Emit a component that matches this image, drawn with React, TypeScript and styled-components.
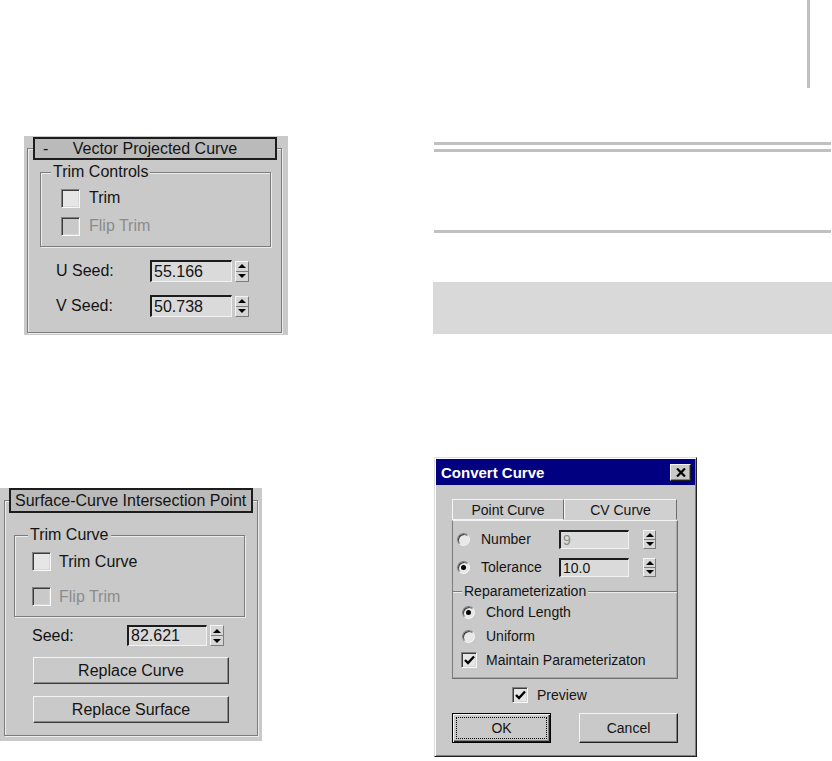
import styled, { createGlobalStyle } from 'styled-components';

const panelBg = '#c9c9c9';
const ink = '#141414';

const GlobalStyle = createGlobalStyle`
  html, body {
    margin: 0;
    padding: 0;
    background: #ffffff;
  }
  body {
    font-family: "Liberation Sans", Arial, sans-serif;
    color: ${ink};
  }
  * {
    box-sizing: border-box;
  }
`;

const Page = styled.div`
  display: flex;
  width: 832px;
  height: 761px;
  overflow: hidden;
`;

const LeftColumn = styled.div`
  width: 433px;
  display: flex;
  flex-direction: column;
  align-items: flex-start;
`;

const RightColumn = styled.div`
  width: 399px;
  display: flex;
  flex-direction: column;
  align-items: flex-start;
`;

/* ---------- page decorations ---------- */

const MarginMark = styled.div`
  align-self: stretch;
  display: flex;
  justify-content: flex-end;
  padding-right: 22px;
`;

const MarginBar = styled.div`
  width: 3px;
  height: 88px;
  background: #c0c0c0;
`;

const Rule = styled.div<{ $gap: number }>`
  margin-top: ${(p) => p.$gap}px;
  margin-left: 1px;
  width: 397px;
  height: 3px;
  background: #c0c0c0;
`;

const ShadedBlock = styled.div`
  margin-top: 49px;
  width: 399px;
  height: 52px;
  background: #d9d9d9;
`;

/* ---------- rollout panels ---------- */

const Rollout = styled.section<{
  $top: number;
  $left: number;
  $width: number;
  $height: number;
  $pad: string;
}>`
  margin-top: ${(p) => p.$top}px;
  margin-left: ${(p) => p.$left}px;
  width: ${(p) => p.$width}px;
  height: ${(p) => p.$height}px;
  padding: ${(p) => p.$pad};
  background: ${panelBg};
  font-size: 16px;
  display: flex;
  flex-direction: column;
`;

const RolloutFrame = styled.div`
  margin-top: 12px;
  flex: 1;
  display: flex;
  flex-direction: column;
  align-items: flex-start;
  border: 1px solid #7c7c7c;
  box-shadow: 1px 1px 0 #ececec, inset 1px 1px 0 #ececec;
`;

const RolloutHeader = styled.div<{ $height: number; $lift: number; $ml: number; $centered?: boolean }>`
  align-self: stretch;
  margin: -${(p) => p.$lift}px 4px 0 ${(p) => p.$ml}px;
  height: ${(p) => p.$height}px;
  border: 2px solid #1c1c1c;
  background: #bababa;
  display: grid;
  grid-template-columns: ${(p) => (p.$centered ? '28px 1fr 28px' : '1fr')};
  align-items: center;
  padding-left: ${(p) => (p.$centered ? 0 : 4)}px;
  white-space: nowrap;
  line-height: 1;
`;

const Collapse = styled.span`
  padding-left: 8px;
`;

const HeaderTitle = styled.span<{ $centered?: boolean }>`
  text-align: ${(p) => (p.$centered ? 'center' : 'left')};
`;

const GroupBox = styled.div<{ $top: number; $ml: number; $mr: number; $pb: number }>`
  align-self: stretch;
  margin: ${(p) => p.$top}px ${(p) => p.$mr}px 0 ${(p) => p.$ml}px;
  padding-bottom: ${(p) => p.$pb}px;
  border: 1px solid #7c7c7c;
  box-shadow: 1px 1px 0 #ececec, inset 1px 1px 0 #ececec;
`;

const RuleGroup = styled.div<{ $top: number }>`
  margin-top: ${(p) => p.$top}px;
  border-top: 1px solid #7c7c7c;
  box-shadow: inset 0 1px 0 #ececec;
`;

const GroupLabel = styled.span<{ $ml: number }>`
  display: block;
  width: fit-content;
  margin: -10px 0 0 ${(p) => p.$ml}px;
  padding: 0 2px;
  line-height: 18px;
  background: ${panelBg};
`;

const Rows = styled.div<{ $pt: number }>`
  padding-top: ${(p) => p.$pt}px;
`;

const CheckRow = styled.label<{ $h: number; $pl: number; $gap: number; $disabled?: boolean }>`
  display: flex;
  align-items: center;
  height: ${(p) => p.$h}px;
  padding-left: ${(p) => p.$pl}px;
  gap: ${(p) => p.$gap}px;
  color: ${(p) => (p.$disabled ? '#8c8c8c' : ink)};
  white-space: nowrap;
`;

const CheckBox = styled.span<{ $size: number; $disabled?: boolean }>`
  flex: none;
  width: ${(p) => p.$size}px;
  height: ${(p) => p.$size}px;
  display: flex;
  align-items: center;
  justify-content: center;
  border: 1px solid;
  border-color: #808080 #f8f8f8 #f8f8f8 #808080;
  box-shadow: inset 1px 1px 0 #3c3c3c, inset -1px -1px 0 #d6d6d6;
  background: ${(p) => (p.$disabled ? panelBg : '#e6e6e6')};
`;

const RadioDot = styled.span<{ $checked?: boolean }>`
  flex: none;
  position: relative;
  width: 13px;
  height: 13px;
  border-radius: 50%;
  border: 1px solid;
  border-color: #7a7a7a #f4f4f4 #f4f4f4 #7a7a7a;
  box-shadow: inset 1px 1px 0 #3c3c3c;
  background: #e8e8e8;

  &::after {
    content: '';
    display: ${(p) => (p.$checked ? 'block' : 'none')};
    position: absolute;
    left: 3px;
    top: 3px;
    width: 5px;
    height: 5px;
    border-radius: 50%;
    background: #000;
  }
`;

const FieldRow = styled.div<{ $top: number; $h: number; $pl: number }>`
  display: flex;
  align-items: center;
  margin-top: ${(p) => p.$top}px;
  height: ${(p) => p.$h}px;
  padding-left: ${(p) => p.$pl}px;
  white-space: nowrap;
`;

const FieldLabel = styled.span<{ $w: number }>`
  width: ${(p) => p.$w}px;
  flex: none;
`;

const NumberBox = styled.span<{ $w: number; $h: number; $disabled?: boolean }>`
  flex: none;
  width: ${(p) => p.$w}px;
  height: ${(p) => p.$h}px;
  display: flex;
  align-items: center;
  padding-left: 2px;
  background: #dadada;
  border-style: solid;
  border-width: 2px 1px 1px 2px;
  border-color: #1c1c1c #f2f2f2 #f2f2f2 #1c1c1c;
  color: ${(p) => (p.$disabled ? '#8a8a8a' : ink)};
  line-height: 1;
`;

const Spinner = styled.span<{ $w: number; $h: number }>`
  flex: none;
  display: flex;
  flex-direction: column;
  width: ${(p) => p.$w}px;
  height: ${(p) => p.$h}px;
  margin-left: 3px;
  background: #d6d6d6;
  border: 1px solid;
  border-color: #f4f4f4 #7c7c7c #7c7c7c #f4f4f4;
`;

const SpinHalf = styled.span`
  flex: 1;
  display: flex;
  align-items: center;
  justify-content: center;

  & + & {
    border-top: 1px solid #7c7c7c;
  }
`;

const Arrow = styled.span<{ $down?: boolean }>`
  width: 0;
  height: 0;
  border-left: 4px solid transparent;
  border-right: 4px solid transparent;
  ${(p) => (p.$down ? 'border-top: 4px solid #000;' : 'border-bottom: 4px solid #000;')}
`;

const PanelButton = styled.button<{ $top: number }>`
  margin: ${(p) => p.$top}px 0 0 28px;
  width: 196px;
  height: 27px;
  padding: 0;
  font-family: "Liberation Sans", Arial, sans-serif;
  font-size: 16px;
  color: ${ink};
  background: ${panelBg};
  border: 1px solid;
  border-color: #f4f4f4 #3a3a3a #3a3a3a #f4f4f4;
  box-shadow: inset -1px -1px 0 #8a8a8a;
`;

/* ---------- dialog ---------- */

const Dialog = styled.div`
  margin-top: 123px;
  margin-left: 1px;
  width: 263px;
  height: 300px;
  padding: 1px;
  display: flex;
  flex-direction: column;
  align-items: flex-start;
  background: ${panelBg};
  border: 1px solid;
  border-color: #dedede #202020 #202020 #dedede;
  box-shadow: inset 1px 1px 0 #ffffff, inset -1px -1px 0 #808080;
  font-size: 14px;
`;

const TitleBar = styled.div`
  align-self: stretch;
  height: 26px;
  display: flex;
  align-items: center;
  justify-content: space-between;
  padding: 0 4px 0 5px;
  background: #000080;
  color: #ffffff;
  font-size: 15px;
  font-weight: bold;
`;

const CloseButton = styled.span`
  width: 21px;
  height: 17px;
  display: flex;
  align-items: center;
  justify-content: center;
  background: ${panelBg};
  border: 1px solid;
  border-color: #f4f4f4 #202020 #202020 #f4f4f4;
  box-shadow: inset -1px -1px 0 #808080;
`;

const TabStrip = styled.div`
  display: flex;
  margin: 14px 0 0 16px;
  position: relative;
  z-index: 1;
`;

const Tab = styled.span<{ $w: number; $active?: boolean }>`
  width: ${(p) => p.$w}px;
  height: 21px;
  display: flex;
  align-items: center;
  justify-content: center;
  background: ${(p) => (p.$active ? '#d0d0d0' : panelBg)};
  border: 1px solid;
  border-color: #f4f4f4 #6e6e6e ${(p) => (p.$active ? 'transparent' : '#f4f4f4')} #f4f4f4;
  margin-bottom: ${(p) => (p.$active ? -1 : 0)}px;
`;

const TabBody = styled.div`
  margin-left: 16px;
  width: 226px;
  height: 159px;
  padding-top: 4px;
  border: 1px solid;
  border-color: #f4f4f4 #6e6e6e #6e6e6e #7c7c7c;
  box-shadow: inset -1px -1px 0 #a8a8a8;
`;

const OptionRow = styled.div<{ $h: number; $pl: number; $gap: number }>`
  display: flex;
  align-items: center;
  height: ${(p) => p.$h}px;
  padding-left: ${(p) => p.$pl}px;
  gap: ${(p) => p.$gap}px;
  white-space: nowrap;
`;

const OptionLabel = styled.span<{ $w?: number }>`
  ${(p) => (p.$w ? `width: ${p.$w}px; flex: none;` : '')}
`;

const PreviewRow = styled.label`
  display: flex;
  align-items: center;
  gap: 9px;
  margin: 8px 0 0 76px;
  height: 16px;
`;

const ButtonRow = styled.div`
  display: flex;
  gap: 28px;
  margin: 10px 0 0 16px;
`;

const DialogButton = styled.button<{ $default?: boolean }>`
  width: 99px;
  height: 30px;
  padding: 3px;
  font-family: "Liberation Sans", Arial, sans-serif;
  font-size: 14px;
  color: ${ink};
  background: ${panelBg};
  border: 1px solid;
  border-color: ${(p) => (p.$default ? '#000' : '#f4f4f4 #202020 #202020 #f4f4f4')};
  box-shadow: ${(p) =>
    p.$default
      ? 'inset 1px 1px 0 #f4f4f4, inset -1px -1px 0 #202020, inset -2px -2px 0 #808080'
      : 'inset -1px -1px 0 #808080'};
`;

const FocusRing = styled.span<{ $on?: boolean }>`
  display: flex;
  align-items: center;
  justify-content: center;
  width: 100%;
  height: 100%;
  border: 1px dotted ${(p) => (p.$on ? '#000' : 'transparent')};
`;

/* ---------- small parts ---------- */

function Spin({ w, h }: { w: number; h: number }) {
  return (
    <Spinner $w={w} $h={h}>
      <SpinHalf>
        <Arrow />
      </SpinHalf>
      <SpinHalf>
        <Arrow $down />
      </SpinHalf>
    </Spinner>
  );
}

function Tick() {
  return (
    <svg width="11" height="10" viewBox="0 0 11 10">
      <path d="M1 5 L4 8 L10 1.5" fill="none" stroke="#000" strokeWidth="2.4" />
    </svg>
  );
}

function CloseGlyph() {
  return (
    <svg width="10" height="9" viewBox="0 0 10 9">
      <path d="M1 0.5 L9 8.5 M9 0.5 L1 8.5" stroke="#000" strokeWidth="2.2" />
    </svg>
  );
}

export default function App() {
  return (
    <>
      <GlobalStyle />
      <Page>
        <LeftColumn>
          <Rollout $top={136} $left={24} $width={264} $height={199} $pad="0 6px 2px 3px">
            <RolloutFrame>
              <RolloutHeader $height={23} $lift={12} $ml={5} $centered>
                <Collapse>-</Collapse>
                <HeaderTitle $centered>Vector Projected Curve</HeaderTitle>
              </RolloutHeader>
              <GroupBox $top={12} $ml={12} $mr={10} $pb={6}>
                <GroupLabel $ml={10}>Trim Controls</GroupLabel>
                <Rows $pt={3}>
                  <CheckRow $h={28} $pl={20} $gap={9}>
                    <CheckBox $size={19} />
                    Trim
                  </CheckRow>
                  <CheckRow $h={28} $pl={20} $gap={9} $disabled>
                    <CheckBox $size={19} $disabled />
                    Flip Trim
                  </CheckRow>
                </Rows>
              </GroupBox>
              <FieldRow $top={13} $h={22} $pl={28}>
                <FieldLabel $w={94}>U Seed:</FieldLabel>
                <NumberBox $w={82} $h={22}>55.166</NumberBox>
                <Spin w={14} h={21} />
              </FieldRow>
              <FieldRow $top={13} $h={22} $pl={28}>
                <FieldLabel $w={94}>V Seed:</FieldLabel>
                <NumberBox $w={82} $h={22}>50.738</NumberBox>
                <Spin w={14} h={21} />
              </FieldRow>
            </RolloutFrame>
          </Rollout>

          <Rollout $top={153} $left={0} $width={262} $height={253} $pad="0 4px 5px 4px">
            <RolloutFrame>
              <RolloutHeader $height={25} $lift={13} $ml={4}>
                <HeaderTitle>Surface-Curve Intersection Point</HeaderTitle>
              </RolloutHeader>
              <GroupBox $top={22} $ml={9} $mr={12} $pb={2}>
                <GroupLabel $ml={13}>Trim Curve</GroupLabel>
                <Rows $pt={0}>
                  <CheckRow $h={35} $pl={17} $gap={8}>
                    <CheckBox $size={19} />
                    Trim Curve
                  </CheckRow>
                  <CheckRow $h={35} $pl={17} $gap={8} $disabled>
                    <CheckBox $size={19} $disabled />
                    Flip Trim
                  </CheckRow>
                </Rows>
              </GroupBox>
              <FieldRow $top={8} $h={21} $pl={27}>
                <FieldLabel $w={95}>Seed:</FieldLabel>
                <NumberBox $w={80} $h={21}>82.621</NumberBox>
                <Spin w={14} h={21} />
              </FieldRow>
              <PanelButton $top={11}>Replace Curve</PanelButton>
              <PanelButton $top={12}>Replace Surface</PanelButton>
            </RolloutFrame>
          </Rollout>
        </LeftColumn>

        <RightColumn>
          <MarginMark>
            <MarginBar />
          </MarginMark>
          <Rule $gap={54} />
          <Rule $gap={4} />
          <Rule $gap={78} />
          <ShadedBlock />

          <Dialog>
            <TitleBar>
              <span>Convert Curve</span>
              <CloseButton>
                <CloseGlyph />
              </CloseButton>
            </TitleBar>
            <TabStrip>
              <Tab $w={112}>Point Curve</Tab>
              <Tab $w={113} $active>
                CV Curve
              </Tab>
            </TabStrip>
            <TabBody>
              <OptionRow $h={28} $pl={4} $gap={11}>
                <RadioDot />
                <OptionLabel $w={67}>Number</OptionLabel>
                <NumberBox $w={70} $h={19} $disabled>
                  9
                </NumberBox>
                <Spin w={13} h={19} />
              </OptionRow>
              <OptionRow $h={28} $pl={4} $gap={11}>
                <RadioDot $checked />
                <OptionLabel $w={67}>Tolerance</OptionLabel>
                <NumberBox $w={70} $h={19}>10.0</NumberBox>
                <Spin w={13} h={19} />
              </OptionRow>
              <RuleGroup $top={10}>
                <GroupLabel $ml={9}>Reparameterization</GroupLabel>
                <OptionRow $h={24} $pl={9} $gap={11}>
                  <RadioDot $checked />
                  <OptionLabel>Chord Length</OptionLabel>
                </OptionRow>
                <OptionRow $h={24} $pl={9} $gap={11}>
                  <RadioDot />
                  <OptionLabel>Uniform</OptionLabel>
                </OptionRow>
                <OptionRow $h={24} $pl={8} $gap={9}>
                  <CheckBox $size={16}>
                    <Tick />
                  </CheckBox>
                  <OptionLabel>Maintain Parameterizaton</OptionLabel>
                </OptionRow>
              </RuleGroup>
            </TabBody>
            <PreviewRow>
              <CheckBox $size={16}>
                <Tick />
              </CheckBox>
              Preview
            </PreviewRow>
            <ButtonRow>
              <DialogButton $default>
                <FocusRing $on>OK</FocusRing>
              </DialogButton>
              <DialogButton>
                <FocusRing>Cancel</FocusRing>
              </DialogButton>
            </ButtonRow>
          </Dialog>
        </RightColumn>
      </Page>
    </>
  );
}
